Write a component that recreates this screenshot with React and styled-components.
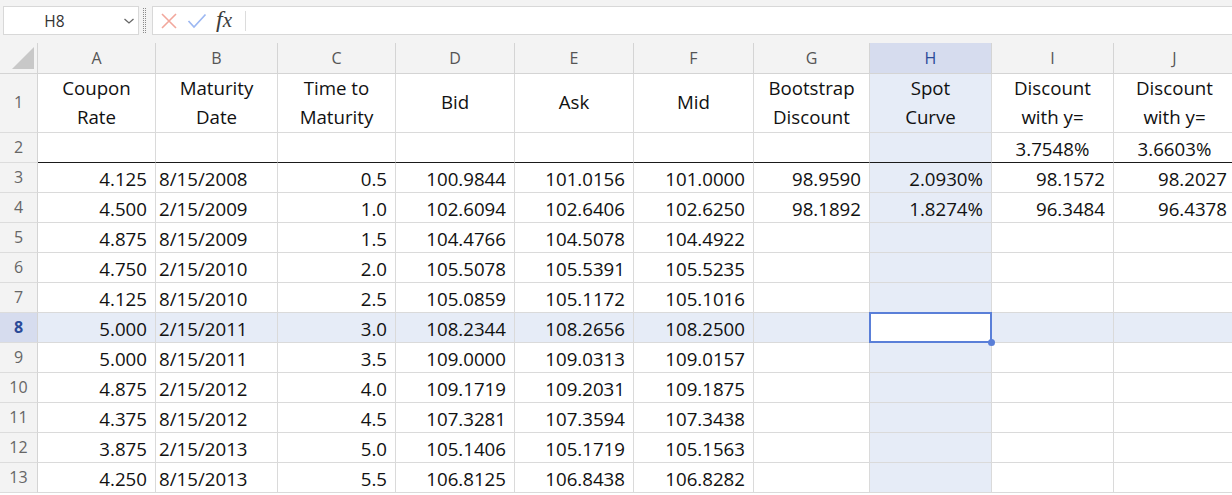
import React from "react";
import styled, { createGlobalStyle } from "styled-components";

const Global = createGlobalStyle`
  html, body { margin: 0; padding: 0; background: #ffffff; overflow: hidden; }
  body { font-family: "Open Sans", "Noto Sans", sans-serif; }
`;

const Page = styled.div`
  width: 1232px;
  height: 495px;
  overflow: hidden;
  background: #ffffff;
`;

const Toolbar = styled.div`
  height: 43px;
  background: #f3f3f3;
  display: flex;
  align-items: flex-start;
  padding: 6px 0 0 3px;
  box-sizing: border-box;
`;

const NameBox = styled.div`
  width: 136px;
  height: 29px;
  box-sizing: border-box;
  background: #fff;
  border: 1px solid #d8d8d8;
  display: flex;
  align-items: center;
  font-size: 15.5px;
  color: #333;
`;

const NameText = styled.div`
  flex: 1;
  text-align: center;
  padding-right: 18px;
`;

const Chevron = styled.svg`
  width: 12px;
  height: 8px;
  margin-right: 3px;
`;

const Grip = styled.div`
  width: 1px;
  height: 25px;
  margin: 2px 6px 0 4px;
  border-left: 1px dotted #8a8a8a;
  border-right: 1px dotted #8a8a8a;
`;

const FormulaBox = styled.div`
  flex: 1;
  height: 29px;
  box-sizing: border-box;
  background: #fff;
  border: 1px solid #d8d8d8;
  border-right: none;
  display: flex;
  align-items: center;
  padding-left: 2px;
`;

const IconSlot = styled.div`
  width: 28px;
  display: flex;
  align-items: center;
  justify-content: center;
`;

const Fx = styled.span`
  font-family: "Liberation Serif", "DejaVu Serif", serif;
  font-style: italic;
  font-size: 24px;
  color: #3c3c3c;
  width: 30px;
  text-align: center;
  line-height: 1;
  margin-top: -3px;
  margin-left: -2px;
`;

const FxX = styled.span`
  font-size: 21px;
`;

const Divider = styled.div`
  width: 1px;
  height: 20px;
  background: #dcdcdc;
  margin-left: 6px;
`;

const Sheet = styled.div`
  display: grid;
  grid-template-columns: 38px 118px 122px 118px 119px 119px 120px 116px 122px 122px 122px;
  grid-template-rows: 31px 59px repeat(12, 30px);
`;

const Corner = styled.div`
  background: #f3f3f3;
  border-right: 1px solid #d4d4d4;
  border-bottom: 1px solid #d4d4d4;
  box-sizing: border-box;
  position: relative;
`;

const Triangle = styled.div`
  position: absolute;
  left: 12px;
  top: 4px;
  width: 22px;
  height: 22px;
  background: #c8c8c8;
  clip-path: polygon(100% 0, 100% 100%, 0 100%);
`;

const ColHead = styled.div`
  background: ${(p) => (p.$active ? "#d6dcee" : "#f3f3f3")};
  color: ${(p) => (p.$active ? "#2a4a98" : "#555")};
  border-right: 1px solid #d4d4d4;
  border-bottom: 1px solid #d4d4d4;
  box-sizing: border-box;
  display: flex;
  align-items: center;
  justify-content: center;
  font-size: 16px;
  padding-bottom: 1px;
`;

const RowHead = styled.div`
  background: ${(p) => (p.$active ? "#d6dcee" : "#f3f3f3")};
  color: ${(p) => (p.$active ? "#2a4a98" : "#666")};
  font-weight: ${(p) => (p.$active ? 700 : 400)};
  border-right: 1px solid #d4d4d4;
  border-bottom: 1px solid #dcdcdc;
  box-sizing: border-box;
  display: flex;
  align-items: center;
  justify-content: center;
  font-size: 16px;
  padding-bottom: 2px;
`;

const Cell = styled.div`
  position: relative;
  box-sizing: border-box;
  background: ${(p) => (p.$selected ? "#ffffff" : p.$hl ? "#e6ecf7" : "#ffffff")};
  border-right: 1px solid #dadada;
  border-bottom: 1px solid ${(p) => (p.$thick ? "#1a1a1a" : "#dadada")};
  display: flex;
  align-items: center;
  justify-content: ${(p) =>
    p.$align === "right" ? "flex-end" : p.$align === "left" ? "flex-start" : "center"};
  text-align: ${(p) => p.$align || "center"};
  padding: ${(p) =>
    p.$wrap
      ? "0 0 3px 0"
      : p.$align === "right"
      ? "1px 8px 0 0"
      : p.$align === "left"
      ? "1px 0 0 3px"
      : "1px 0 0 0"};
  font-size: 18.7px;
  line-height: 29px;
  color: #111;
  white-space: ${(p) => (p.$wrap ? "pre-line" : "nowrap")};
`;

const Selection = styled.div`
  position: absolute;
  left: -1px;
  right: -1px;
  top: -1px;
  bottom: -1px;
  border: 2px solid #5a7fd8;
  box-sizing: border-box;
  pointer-events: none;
  z-index: 2;
`;

const Handle = styled.div`
  position: absolute;
  right: -4px;
  bottom: -4px;
  width: 7px;
  height: 7px;
  border-radius: 50%;
  background: #5a7fd8;
  z-index: 3;
`;

const cols = ["A", "B", "C", "D", "E", "F", "G", "H", "I", "J"];

const headers = [
  "Coupon\nRate",
  "Maturity\nDate",
  "Time to\nMaturity",
  "Bid",
  "Ask",
  "Mid",
  "Bootstrap\nDiscount",
  "Spot\nCurve",
  "Discount\nwith y=",
  "Discount\nwith y=",
];

const A = ["4.125", "4.500", "4.875", "4.750", "4.125", "5.000", "5.000", "4.875", "4.375", "3.875", "4.250"];
const B = ["8/15/2008", "2/15/2009", "8/15/2009", "2/15/2010", "8/15/2010", "2/15/2011", "8/15/2011", "2/15/2012", "8/15/2012", "2/15/2013", "8/15/2013"];
const C = ["0.5", "1.0", "1.5", "2.0", "2.5", "3.0", "3.5", "4.0", "4.5", "5.0", "5.5"];
const D = ["100.9844", "102.6094", "104.4766", "105.5078", "105.0859", "108.2344", "109.0000", "109.1719", "107.3281", "105.1406", "106.8125"];
const E = ["101.0156", "102.6406", "104.5078", "105.5391", "105.1172", "108.2656", "109.0313", "109.2031", "107.3594", "105.1719", "106.8438"];
const F = ["101.0000", "102.6250", "104.4922", "105.5235", "105.1016", "108.2500", "109.0157", "109.1875", "107.3438", "105.1563", "106.8282"];
const G = ["98.9590", "98.1892"];
const H = ["2.0930%", "1.8274%"];
const I = ["98.1572", "96.3484"];
const J = ["98.2027", "96.4378"];

const dataRows = A.map((_, i) => [
  { v: A[i], a: "right" },
  { v: B[i], a: "left" },
  { v: C[i], a: "right" },
  { v: D[i], a: "right" },
  { v: E[i], a: "right" },
  { v: F[i], a: "right" },
  { v: G[i] || "", a: "right" },
  { v: H[i] || "", a: "right" },
  { v: I[i] || "", a: "right" },
  { v: J[i] || "", a: "right" },
]);

export default function App() {
  return (
    <Page>
      <Global />
      <Toolbar>
        <NameBox>
          <NameText>H8</NameText>
          <Chevron viewBox="0 0 12 8">
            <path d="M1.5 2 L6 6 L10.5 2" fill="none" stroke="#666" strokeWidth="1.3" />
          </Chevron>
        </NameBox>
        <Grip />
        <FormulaBox>
          <IconSlot>
            <svg width="18" height="18" viewBox="0 0 18 18">
              <path d="M2 2 L16 16 M16 2 L2 16" stroke="#f2a79c" strokeWidth="1.6" fill="none" />
            </svg>
          </IconSlot>
          <IconSlot>
            <svg width="20" height="16" viewBox="0 0 20 16">
              <path d="M1.5 8 L7 14 L18.5 1.5" stroke="#9db8f2" strokeWidth="1.7" fill="none" />
            </svg>
          </IconSlot>
          <Fx>
            f<FxX>x</FxX>
          </Fx>
          <Divider />
        </FormulaBox>
      </Toolbar>
      <Sheet>
        <Corner>
          <Triangle />
        </Corner>
        {cols.map((c) => (
          <ColHead key={c} $active={c === "H"}>
            {c}
          </ColHead>
        ))}

        <RowHead>1</RowHead>
        {headers.map((h, i) => (
          <Cell key={"h" + i} $hl={cols[i] === "H"} $wrap>
            {h}
          </Cell>
        ))}

        <RowHead>2</RowHead>
        {cols.map((c) => (
          <Cell key={"r2" + c} $hl={c === "H"} $thick>
            {c === "I" ? "3.7548%" : c === "J" ? "3.6603%" : ""}
          </Cell>
        ))}

        {dataRows.map((row, ri) => {
          const rn = ri + 3;
          const activeRow = rn === 8;
          return (
            <React.Fragment key={rn}>
              <RowHead $active={activeRow}>{rn}</RowHead>
              {row.map((cell, ci) => {
                const selected = activeRow && cols[ci] === "H";
                return (
                  <Cell
                    key={rn + cols[ci]}
                    $align={cell.a}
                    $hl={activeRow || cols[ci] === "H"}
                    $selected={selected}
                  >
                    {cell.v}
                    {selected && (
                      <>
                        <Selection />
                        <Handle />
                      </>
                    )}
                  </Cell>
                );
              })}
            </React.Fragment>
          );
        })}
      </Sheet>
    </Page>
  );
}
